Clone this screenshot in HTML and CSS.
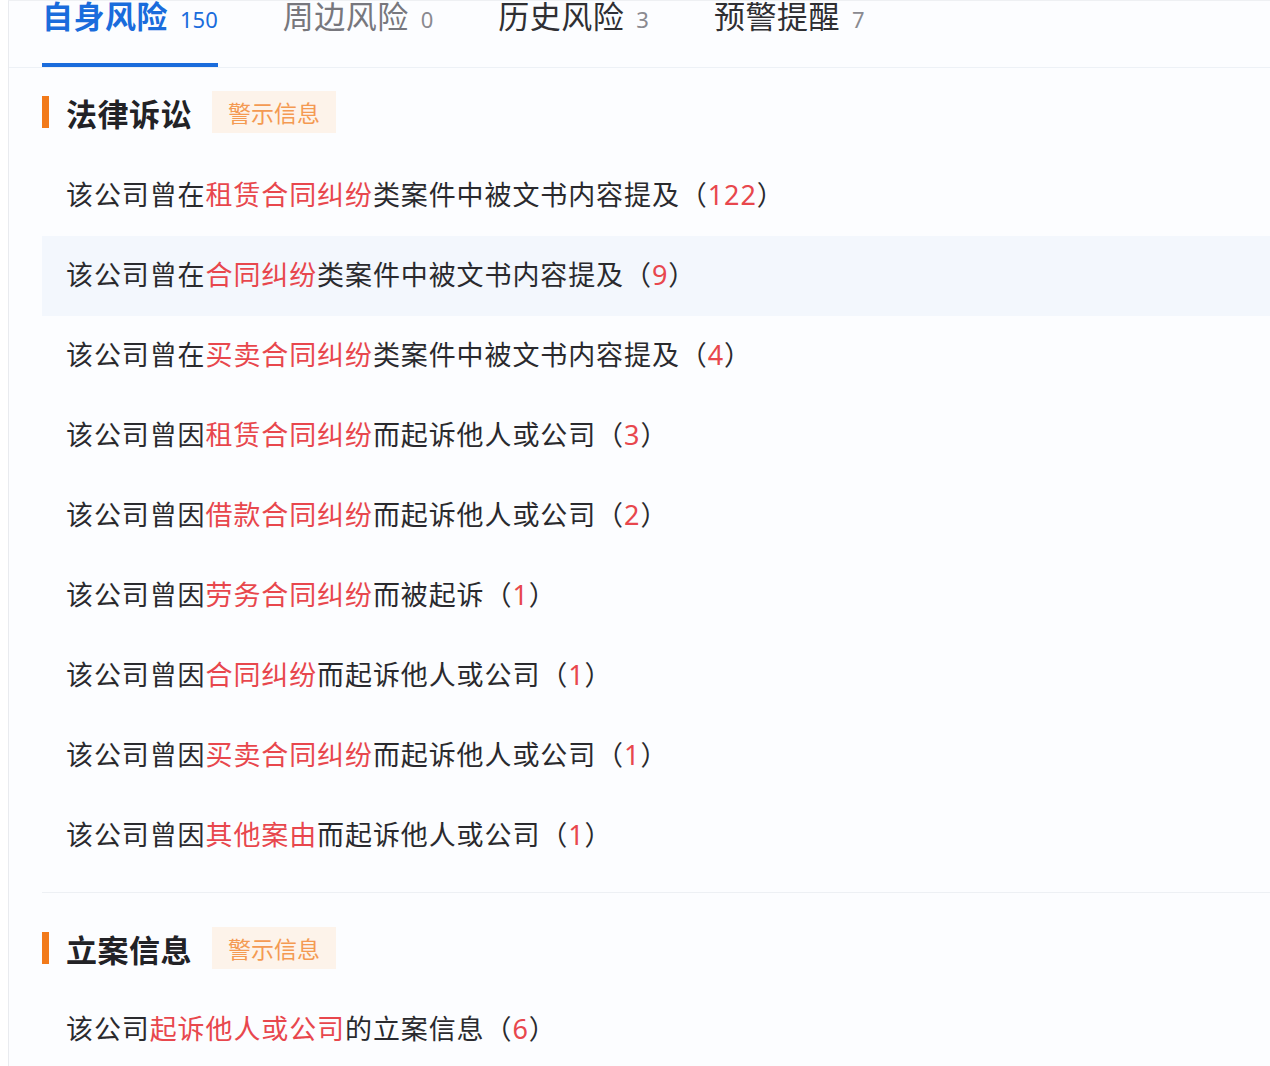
FILE: index.html
```html
<!DOCTYPE html>
<html lang="zh-CN">
<head>
<meta charset="utf-8">
<title>风险</title>
<link rel="stylesheet" href="styles.css">
</head>
<body>
<div class="page">
  <div class="tabs">
    <div class="tab active"><span class="tab-name">自身风险</span><span class="tab-count">150</span></div>
    <div class="tab muted"><span class="tab-name">周边风险</span><span class="tab-count">0</span></div>
    <div class="tab"><span class="tab-name">历史风险</span><span class="tab-count">3</span></div>
    <div class="tab"><span class="tab-name">预警提醒</span><span class="tab-count">7</span></div>
  </div>

  <div class="section first">
    <div class="sec-head">
      <span class="bar"></span>
      <span class="sec-title">法律诉讼</span>
      <span class="badge">警示信息</span>
    </div>
    <div class="row">该公司曾在<em>租赁合同纠纷</em>类案件中被文书内容提及（<b>122</b>）</div>
    <div class="row hl">该公司曾在<em>合同纠纷</em>类案件中被文书内容提及（<b>9</b>）</div>
    <div class="row">该公司曾在<em>买卖合同纠纷</em>类案件中被文书内容提及（<b>4</b>）</div>
    <div class="row">该公司曾因<em>租赁合同纠纷</em>而起诉他人或公司（<b>3</b>）</div>
    <div class="row">该公司曾因<em>借款合同纠纷</em>而起诉他人或公司（<b>2</b>）</div>
    <div class="row">该公司曾因<em>劳务合同纠纷</em>而被起诉（<b>1</b>）</div>
    <div class="row">该公司曾因<em>合同纠纷</em>而起诉他人或公司（<b>1</b>）</div>
    <div class="row">该公司曾因<em>买卖合同纠纷</em>而起诉他人或公司（<b>1</b>）</div>
    <div class="row">该公司曾因<em>其他案由</em>而起诉他人或公司（<b>1</b>）</div>
  </div>

  <div class="section second">
    <div class="sec-head">
      <span class="bar"></span>
      <span class="sec-title">立案信息</span>
      <span class="badge">警示信息</span>
    </div>
    <div class="row">该公司<em>起诉他人或公司</em>的立案信息（<b>6</b>）</div>
  </div>
</div>
</body>
</html>
```
FILE: styles.css
```css
html, body {
  margin: 0;
  padding: 0;
  background: #ffffff;
}
body {
  font-family: "Noto Sans CJK SC", "Noto Sans", sans-serif;
  color: #2a2a2e;
  overflow: hidden;
}
.page {
  margin-left: 8px;
  height: 1066px;
  border-left: 1px solid #e9ebef;
  border-top: 1px solid #eef0f3;
  background: #fcfdff;
  box-sizing: border-box;
}
.tabs {
  display: flex;
  gap: 65px;
  padding-left: 33px;
  height: 67px;
  border-bottom: 1px solid #edf1f6;
  margin-top: -1px;
}
.tab {
  height: 67px;
  box-sizing: border-box;
  display: flex;
  align-items: baseline;
  line-height: 30px;
  color: #2f2f33;
}
.tab-name {
  font-size: 31px;
  letter-spacing: 0.5px;
}
.tab-count {
  font-size: 22px;
  margin-left: 12px;
  color: #8a8a90;
  font-family: "Noto Sans", sans-serif;
}
.tab.active {
  border-bottom: 4px solid #1a6cdc;
  color: #1a6cdc;
}
.tab.active .tab-name { font-weight: 700; }
.tab.active .tab-count { color: #1a6cdc; }
.tab.muted { color: #77777d; }
.section {
  margin-left: 33px;
}
.section.first {
  padding-top: 23px;
  padding-bottom: 16px;
  border-bottom: 1px solid #edf0f4;
}
.section.second {
  padding-top: 34px;
}
.section.first .sec-head {
  margin-bottom: 23px;
}
.sec-head {
  display: flex;
  align-items: center;
  height: 42px;
  margin-bottom: 21px;
}
.bar {
  width: 7px;
  height: 32px;
  background: #f27a1a;
}
.sec-title {
  margin-left: 17px;
  font-size: 31px;
  font-weight: 700;
  color: #222226;
  letter-spacing: 0.5px;
}
.badge {
  margin-left: 20px;
  height: 42px;
  line-height: 42px;
  padding: 0 16px;
  background: #fdf3ea;
  color: #f49a52;
  font-size: 23px;
}
.row {
  height: 80px;
  line-height: 76px;
  padding-left: 24px;
  font-size: 27px;
  letter-spacing: 0.9px;
  color: #2a2a2e;
  white-space: nowrap;
}
.row.hl {
  background: #f3f7fd;
}
.row em {
  font-style: normal;
  color: #e8474d;
}
.row b {
  font-weight: 400;
  color: #e8474d;
  font-family: "Noto Sans", sans-serif;
}
```
